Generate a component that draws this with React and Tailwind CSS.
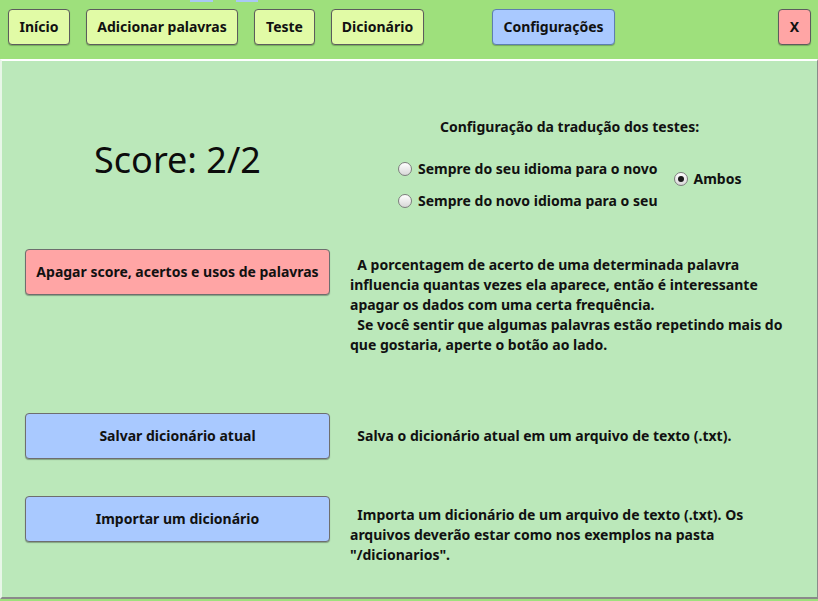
import React from 'react';

const font = { fontFamily: '"Noto Sans", "Open Sans", sans-serif' };

const NavButton = ({ label, className }) => (
  <button
    className={`h-[36px] pb-[1px] rounded-[4px] border border-[#5c5c5c] text-[14px] font-bold text-[#111] shadow-[0_1px_1px_rgba(0,0,0,0.25)] flex items-center justify-center ${className}`}
  >
    {label}
  </button>
);

const Radio = ({ checked }) => (
  <span className="w-[14px] h-[14px] rounded-full border border-[#7d7d7d] bg-gradient-to-b from-[#ffffff] to-[#d8d8d8] flex items-center justify-center shrink-0">
    {checked && <span className="w-[6px] h-[6px] rounded-full bg-[#1a1a1a]" />}
  </span>
);

const RadioRow = ({ label, checked }) => (
  <div className="h-[20px] flex items-center gap-[6px]">
    <Radio checked={checked} />
    <span className="text-[14px] font-bold leading-[20px] whitespace-nowrap">{label}</span>
  </div>
);

const ActionButton = ({ label, color }) => (
  <button
    className={`w-[305px] h-[46px] pb-[1px] shrink-0 rounded-[4px] border border-[#6e6e6e] shadow-[0_1px_1px_rgba(0,0,0,0.3)] text-[14px] font-bold text-[#111] flex items-center justify-center ${color}`}
  >
    {label}
  </button>
);

const App = () => {
  return (
    <div className="relative w-[818px] h-[601px] bg-[#9ee07c] text-[#111] overflow-hidden" style={font}>
      <div className="absolute top-0 left-[190px] w-[23px] h-[2px] bg-[#a9c9f5]" />
      <div className="absolute top-0 left-[236px] w-[22px] h-[2px] bg-[#a9c9f5]" />

      {/* top navigation */}
      <div className="h-[59px] flex items-start pt-[9px] pl-[8px]">
        <NavButton label="Início" className="w-[62px] bg-[#e1fba6]" />
        <NavButton label="Adicionar palavras" className="w-[152px] ml-[16px] bg-[#e1fba6]" />
        <NavButton label="Teste" className="w-[61px] ml-[16px] bg-[#e1fba6]" />
        <NavButton label="Dicionário" className="w-[93px] ml-[16px] bg-[#e1fba6]" />
        <NavButton label="Configurações" className="w-[123px] ml-[68px] bg-[#a9c9ff] border-[#5d7fb0]" />
        <NavButton label="X" className="w-[33px] ml-[163px] bg-[#ffa5a5]" />
      </div>

      {/* settings panel */}
      <div className="h-[540px] bg-[#bbe8ba] border-t-2 border-l-2 border-t-white border-l-[#e8f6e8] border-r border-r-[#8a8a8a] border-b-2 border-b-[#8a8a8a] pt-[56px] pl-[23px] flex flex-col">
        <div className="flex items-start">
          <div className="w-[305px] mt-[19px] text-center text-[36px] leading-[48px] text-[#0c0c0c]">
            Score: 2/2
          </div>
          <div className="ml-[68px] flex flex-col">
            <div className="ml-[42px] text-[14px] font-bold leading-[20px]">
              Configuração da tradução dos testes:
            </div>
            <div className="mt-[22px] flex items-start">
              <div className="flex flex-col gap-[12px]">
                <RadioRow label="Sempre do seu idioma para o novo" />
                <RadioRow label="Sempre do novo idioma para o seu" />
              </div>
              <div className="ml-[16px] mt-[10px]">
                <RadioRow label="Ambos" checked />
              </div>
            </div>
          </div>
        </div>

        <div className="mt-[38px] flex items-start">
          <ActionButton label="Apagar score, acertos e usos de palavras" color="bg-[#ffa5a5]" />
          <p className="ml-[20px] mt-[6px] text-[14px] font-bold leading-[20px] whitespace-pre">
            {'  A porcentagem de acerto de uma determinada palavra\ninfluencia quantas vezes ela aparece, então é interessante\napagar os dados com uma certa frequência.\n  Se você sentir que algumas palavras estão repetindo mais do\nque gostaria, aperte o botão ao lado.'}
          </p>
        </div>

        <div className="mt-[58px] flex items-start">
          <ActionButton label="Salvar dicionário atual" color="bg-[#a9c9ff]" />
          <p className="ml-[20px] mt-[13px] text-[14px] font-bold leading-[20px] whitespace-pre">
            {'  Salva o dicionário atual em um arquivo de texto (.txt).'}
          </p>
        </div>

        <div className="mt-[37px] flex items-start">
          <ActionButton label="Importar um dicionário" color="bg-[#a9c9ff]" />
          <p className="ml-[20px] mt-[9px] text-[14px] font-bold leading-[20px] whitespace-pre">
            {'  Importa um dicionário de um arquivo de texto (.txt). Os\narquivos deverão estar como nos exemplos na pasta\n"/dicionarios".'}
          </p>
        </div>
      </div>
    </div>
  );
};

export default App;
